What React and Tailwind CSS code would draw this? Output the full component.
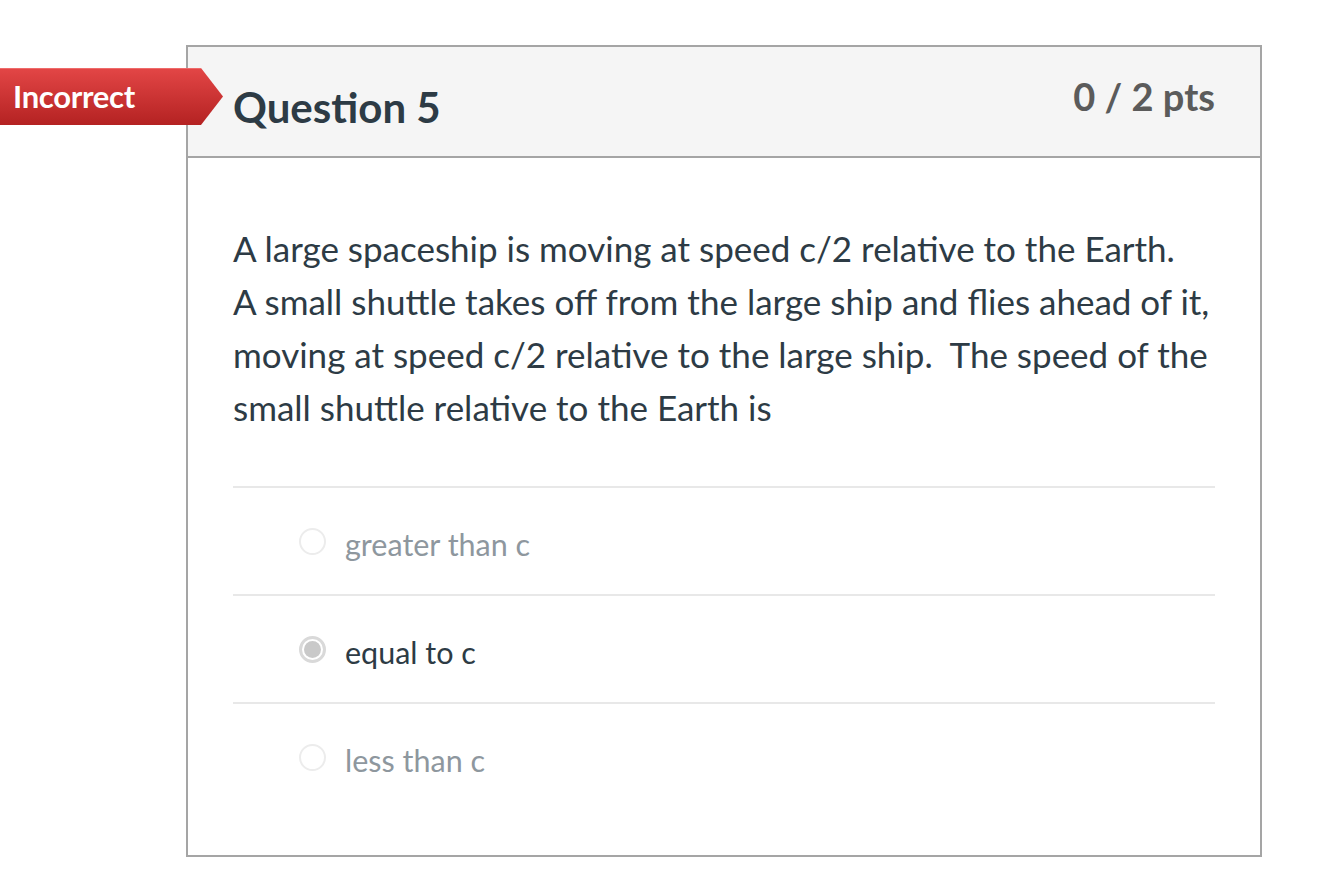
import React from 'react';

const options = [
  { label: 'greater than c', selected: false },
  { label: 'equal to c', selected: true },
  { label: 'less than c', selected: false },
];

function Radio({ selected }) {
  return selected ? (
    <span className="w-[27px] h-[27px] rounded-full border-[3px] border-[#d9d9d9] bg-white flex items-center justify-center shrink-0">
      <span className="w-[17px] h-[17px] rounded-full bg-[#c9c9c9]" />
    </span>
  ) : (
    <span className="w-[27px] h-[27px] rounded-full border-2 border-[#ececec] bg-white shrink-0" />
  );
}

export default function App() {
  return (
    <div className="min-h-screen bg-white font-['Lato','Open_Sans',sans-serif] pt-[45px]">
      <div className="relative ml-[186px] w-[1076px] h-[812px] border-2 border-[#a5a5a5]">
        {/* Incorrect banner */}
        <div className="absolute left-[-188px] top-[21px] w-[224px] h-[57px]">
          <svg width="224" height="57" viewBox="0 0 224 57" className="absolute inset-0">
            <defs>
              <linearGradient id="rg" x1="0" y1="0" x2="0" y2="1">
                <stop offset="0" stopColor="#e34646" />
                <stop offset="1" stopColor="#b42222" />
              </linearGradient>
            </defs>
            <polygon points="0,0 201,0 223,28.5 201,57 0,57" fill="url(#rg)" />
            <line x1="0" y1="0.5" x2="201" y2="0.5" stroke="#ef6a6a" strokeWidth="1" />
          </svg>
          <span className="relative block pl-[13px] leading-[57px] text-[31px] font-bold text-white tracking-[-0.3px]">Incorrect</span>
        </div>

        <div className="bg-[#f5f5f5] border-b-2 border-[#a5a5a5] h-[111px] flex items-start justify-between pl-[45px] pr-[45px]">
          <h2 className="mt-[39px] text-[42px] font-bold text-[#2d3b45] leading-none">Question 5</h2>
          <div className="mt-[30px] text-[38px] font-bold text-[#5b5b5b] leading-none">0 / 2 pts</div>
        </div>

        <div className="px-[45px]">
          <p className="mt-[64px] text-[35px] leading-[53px] text-[#2d3b45] whitespace-nowrap">
            A large spaceship is moving at speed c/2 relative to the Earth.
            <br />
            A small shuttle takes off from the large ship and flies ahead of it,
            <br />
            moving at speed c/2 relative to the large ship.&nbsp; The speed of the
            <br />
            small shuttle relative to the Earth is
          </p>

          <div className="mt-[52px]">
            {options.map((o) => (
              <div key={o.label} className="border-t-2 border-[#e8e8e8] h-[108px] flex items-center pl-[66px] gap-[19px]">
                <Radio selected={o.selected} />
                <span className={`mt-[8px] text-[30.5px] ${o.selected ? 'text-[#2d3b45]' : 'text-[#8e979e]'}`}>{o.label}</span>
              </div>
            ))}
          </div>
        </div>
      </div>
    </div>
  );
}
